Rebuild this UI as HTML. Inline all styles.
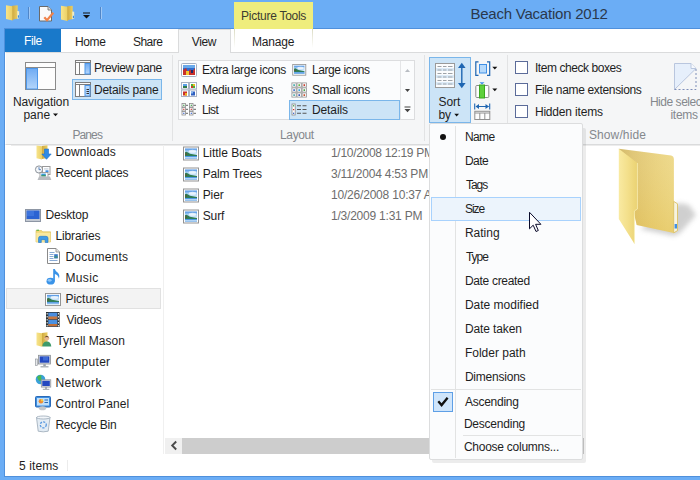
<!DOCTYPE html>
<html><head><meta charset="utf-8">
<style>
*{box-sizing:border-box;margin:0;padding:0}
html,body{width:700px;height:480px;overflow:hidden;background:#6badf5}
body{position:relative;font-family:"Liberation Sans",sans-serif;font-size:12px;color:#1e1e1e}
.a{position:absolute}
.t{position:absolute;white-space:nowrap}
svg{position:absolute;overflow:visible}
</style></head><body>
<!-- window frame / title bar -->
<div class="a" style="left:0;top:0;width:700px;height:480px;background:#6badf5"></div>
<div class="a" style="left:4px;top:28px;width:696px;height:449px;background:#4f90dc"></div>
<!-- picture tools -->
<div class="a" style="left:234px;top:2px;width:79px;height:27px;background:#efed7d"></div>
<!-- tab row -->
<div class="a" style="left:5px;top:29px;width:695px;height:23px;background:#fff"></div>
<div class="a" style="left:5px;top:29px;width:56px;height:23px;background:#1979ca"></div>
<div class="a" style="left:178px;top:29px;width:53px;height:24px;background:#f5f6f7;border:1px solid #dadbdc;border-bottom:none"></div>
<div class="a" style="left:234px;top:29px;width:1px;height:19px;background:linear-gradient(#dcdcc4,#fff)"></div><div class="a" style="left:312px;top:29px;width:1px;height:19px;background:linear-gradient(#dcdcc4,#fff)"></div>
<!-- ribbon body -->
<div class="a" style="left:5px;top:52px;width:695px;height:93px;background:#f5f6f7;border-top:1px solid #dadbdc;border-bottom:1px solid #dadbdc;border-left:1px solid #fff"></div>
<div class="a" style="left:179px;top:52px;width:51px;height:1px;background:#f5f6f7"></div>

<!-- Panes group -->
<div class="a" style="left:72px;top:79px;width:90px;height:21px;background:#cce4f7;border:1px solid #7ab6ea"></div>
<div class="a" style="left:172px;top:55px;width:1px;height:86px;background:#e2e3e4"></div>

<!-- Layout group -->
<div class="a" style="left:178px;top:60px;width:237px;height:60px;background:#fbfcfd;border:1px solid #dcdddf"></div>
<div class="a" style="left:289px;top:100px;width:111px;height:20px;background:#cce4f7;border:1px solid #7ab6ea"></div>
<div class="a" style="left:424px;top:55px;width:1px;height:86px;background:#e2e3e4"></div>

<!-- Current view -->
<div class="a" style="left:429px;top:57px;width:42px;height:66px;background:#cce4f7;border:1px solid #7ab6ea"></div>
<div class="a" style="left:507px;top:55px;width:1px;height:68px;background:#e2e3e4"></div>

<!-- Show/hide -->
<div class="a" style="left:515px;top:61px;width:13px;height:13px;background:#fff;border:1px solid #5b6b99"></div>
<div class="a" style="left:515px;top:83px;width:13px;height:13px;background:#fff;border:1px solid #5b6b99"></div>
<div class="a" style="left:515px;top:105px;width:13px;height:13px;background:#fff;border:1px solid #5b6b99"></div>

<!-- content -->
<div class="a" style="left:5px;top:145px;width:695px;height:331px;background:#fff"></div>

<div class="a" style="left:11px;top:145px;width:689px;height:1px;background:#ececec"></div>
<div class="a" style="left:163px;top:145px;width:1px;height:309px;background:#f0f0f0"></div>
<!-- nav selection -->
<div class="a" style="left:6px;top:288px;width:155px;height:21px;background:#f3f3f3;border:1px solid #e1e1e1"></div>
<!-- scrollbar -->
<div class="a" style="left:165px;top:438px;width:419px;height:16px;background:#f0f0f0"></div>
<div class="a" style="left:182px;top:438px;width:402px;height:16px;background:#cdcdcd"></div>
<!-- status -->
<div class="a" style="left:67px;top:460px;width:1px;height:11px;background:#ececec"></div>

<svg width="700" height="480" viewBox="0 0 700 480" style="left:0;top:0">
<defs>
<linearGradient id="fy" x1="0" y1="0" x2="1" y2="0"><stop offset="0" stop-color="#f7e596"/><stop offset="1" stop-color="#e6cb69"/></linearGradient>
<linearGradient id="fb" x1="0" y1="0" x2="1" y2="0"><stop offset="0" stop-color="#cfb155"/><stop offset=".45" stop-color="#e2c666"/><stop offset="1" stop-color="#ecd47d"/></linearGradient>
<linearGradient id="bl" x1="0" y1="0" x2="0" y2="1"><stop offset="0" stop-color="#6fabf3"/><stop offset="1" stop-color="#b4d6fb"/></linearGradient>
<linearGradient id="sky" x1="0" y1="0" x2="0" y2="1"><stop offset="0" stop-color="#8ec5f2"/><stop offset=".45" stop-color="#d6ecf7"/><stop offset=".5" stop-color="#2f6b5a"/><stop offset=".7" stop-color="#3d8a78"/><stop offset=".75" stop-color="#2d7fc8"/><stop offset="1" stop-color="#2a6fc0"/></linearGradient>
<linearGradient id="shd" x1="0" y1="0" x2="1" y2="0"><stop offset="0" stop-color="#000" stop-opacity=".28"/><stop offset="1" stop-color="#000" stop-opacity="0"/></linearGradient>
<g id="sfold">
 <polygon points="6.3,0.800 11.700,0.200 11.700,13.600 6.300,14.800" fill="url(#fbs)"/>
 <polygon points="11.200,6 13.200,6.300 13.200,13.300 11.200,13.700" fill="#f3ecc0"/>
 <rect x="11.900" y="10.300" width="1.100" height="2.400" fill="#3a8ee0"/>
 <rect x="6" y="1.200" width="1" height="14" fill="#c7a540"/>
 <polygon points="0,0.300 6.400,1.200 6.400,15.600 0,14" fill="url(#fys)"/>
</g>
<g id="pic">
 <rect x="0.500" y="0.500" width="15" height="13" fill="#fff" stroke="#939393"/>
 <rect x="2" y="2" width="12" height="10" fill="url(#sky2)"/>
 <ellipse cx="9.500" cy="4.800" rx="3.800" ry="1.500" fill="#fff" opacity=".75"/>
 <polygon points="2,5.800 3.500,5.200 5,6 7,7.300 14,8.600 14,9.600 2,9.600" fill="#2f7d55"/>
 <rect x="2.600" y="7" width="1.200" height="1.200" fill="#8a3a20"/>
 <rect x="2" y="9.600" width="12" height="2.400" fill="#3f8ee0"/>
 <rect x="2" y="10.500" width="12" height=".8" fill="#cfe6fa"/>
</g>
<linearGradient id="bigsh" x1="0" y1="0" x2="1" y2="0"><stop offset="0" stop-color="#888" stop-opacity=".55"/><stop offset="1" stop-color="#bbb" stop-opacity="0"/></linearGradient>
<linearGradient id="fys" x1="0" y1="0" x2="1" y2="0"><stop offset="0" stop-color="#f7e48c"/><stop offset="1" stop-color="#ebcf64"/></linearGradient><linearGradient id="fbs" x1="0" y1="0" x2="1" y2="0"><stop offset="0" stop-color="#cfa941"/><stop offset="1" stop-color="#ebcf63"/></linearGradient>
<linearGradient id="sky2" x1="0" y1="0" x2="0" y2="1"><stop offset="0" stop-color="#4a90e2"/><stop offset=".3" stop-color="#a9d1f5"/><stop offset=".75" stop-color="#e6f2fb"/><stop offset="1" stop-color="#e6f2fb"/></linearGradient>
</defs>
<!-- titlebar icons -->
<g transform="translate(6,5)">
 <polygon points="6.3,0.800 11.700,0.200 11.700,13.600 6.300,14.800" fill="url(#fbs)"/>
 <polygon points="11.200,6 13.200,6.300 13.200,13.300 11.200,13.700" fill="#f3ecc0"/>
 <rect x="11.900" y="10.300" width="1.100" height="2.400" fill="#3a8ee0"/>
 <rect x="6" y="1.200" width="1" height="14" fill="#c7a540"/>
 <polygon points="0,0.300 6.400,1.200 6.400,15.600 0,14" fill="url(#fys)"/>
</g>
<rect x="28" y="7" width="1" height="12" fill="#4f86c9"/><rect x="29" y="7" width="1" height="12" fill="#9fc8f6"/>
<path d="M39.5,6.5h8.5l3.5,3.5v11h-12z" fill="#fafafa" stroke="#6a6a6a"/>
<path d="M48,6.5v3.5h3.5" fill="#ddd" stroke="#6a6a6a" stroke-width=".8"/>
<path d="M44.3,17.2l2.7,3 6.3,-7.4" fill="none" stroke="#f0824a" stroke-width="2.2"/>
<g transform="translate(61,5.5)">
 <polygon points="6.3,0.800 11.700,0.200 11.700,13.600 6.300,14.800" fill="url(#fbs)"/>
 <polygon points="11.200,6 13.200,6.300 13.200,13.300 11.200,13.700" fill="#f3ecc0"/>
 <rect x="11.900" y="10.300" width="1.100" height="2.400" fill="#3a8ee0"/>
 <rect x="6" y="1.200" width="1" height="14" fill="#c7a540"/>
 <polygon points="0,0.300 6.400,1.200 6.400,15.600 0,14" fill="url(#fys)"/>
</g>
<rect x="83" y="12.500" width="7" height="1" fill="#111"/><polygon points="83,15 90,15 86.500,18.500" fill="#111"/>
<rect x="100" y="7" width="1" height="12" fill="#4f86c9"/><rect x="101" y="7" width="1" height="12" fill="#9fc8f6"/>

<!-- Navigation pane icon -->
<rect x="25.5" y="62.5" width="30" height="27" fill="#fdfdfd" stroke="#8b8b8b"/>
<rect x="26" y="67" width="29" height="1" fill="#8b8b8b"/>
<rect x="26.5" y="68.5" width="11" height="20.5" fill="url(#bl)" stroke="#4d97ea"/>
<polygon points="53,113.5 58,113.5 55.5,116.3" fill="#111"/>
<!-- Preview pane icon -->
<rect x="75.5" y="60.5" width="15" height="14" fill="#fdfdfd" stroke="#7d7d7d"/>
<rect x="76" y="62" width="14" height="1" fill="#7d7d7d"/>
<rect x="79" y="63" width="1" height="11" fill="#7d7d7d"/>
<rect x="85" y="63.5" width="5" height="10.5" fill="url(#bl)" stroke="#4d97ea"/>
<!-- Details pane icon -->
<rect x="75.5" y="82.5" width="15" height="14" fill="#fdfdfd" stroke="#7d7d7d"/>
<rect x="76" y="84" width="14" height="1" fill="#7d7d7d"/>
<rect x="79" y="85" width="1" height="11" fill="#7d7d7d"/>
<rect x="85" y="85.5" width="5" height="10.5" fill="#b9d9fb" stroke="#4d97ea"/>
<path d="M86.5,89.5h2.5M86.5,91.5h2.5M86.5,93.5h2.5" stroke="#333" stroke-width="1"/>

<!-- Layout icons -->
<rect x="181.500" y="63.500" width="15" height="13" rx="1" fill="#fff" stroke="#a6b0c2"/>
<rect x="183" y="65" width="12" height="10" fill="#2e6fd0"/>
<rect x="183" y="65" width="12" height="3" fill="#6aa9ea"/>
<polygon points="183,75 183,70 186,68 188,72 190,69 192,72 195,68 195,75" fill="#c8302a"/>
<rect x="186" y="71" width="3" height="4" fill="#f2c530"/><rect x="191" y="70" width="2" height="3" fill="#1a2a6a"/>
<!-- medium icons -->
<g fill="#fff" stroke="#aab3c4"><rect x="181.500" y="82.500" width="7" height="6.500"/><rect x="189.500" y="82.500" width="7" height="6.500"/><rect x="181.500" y="90" width="7" height="6.500"/><rect x="189.500" y="90" width="7" height="6.500"/></g>
<rect x="183" y="84" width="4" height="2" fill="#5aa0e8"/><rect x="183" y="86" width="4" height="2" fill="#2f7a4a"/>
<rect x="191" y="84" width="4" height="4" fill="#4ab03a"/><rect x="193" y="84" width="2" height="2" fill="#e8c020"/><rect x="191" y="86" width="2" height="2" fill="#d03a2a"/>
<rect x="183" y="91.500" width="4" height="4" fill="#c8302a"/><rect x="185" y="93" width="2" height="2.500" fill="#f0b020"/>
<rect x="191" y="91.500" width="4" height="4" fill="#2e5fc0"/><rect x="191" y="91.500" width="2" height="2" fill="#88b8ee"/>
<!-- list icon -->
<g fill="#fff" stroke="#8c8c8c" stroke-width=".8">
<rect x="182" y="103.500" width="3.500" height="3.500"/><rect x="182" y="107.500" width="3.500" height="3.500"/><rect x="182" y="111.500" width="3.500" height="3.500"/>
<rect x="189.500" y="103.500" width="3.500" height="3.500"/><rect x="189.500" y="107.500" width="3.500" height="3.500"/><rect x="189.500" y="111.500" width="3.500" height="3.500"/></g>
<g><rect x="183.200" y="104.700" width="1.200" height="1.200" fill="#2a9a3a"/><rect x="183.200" y="108.700" width="1.200" height="1.200" fill="#d02a2a"/><rect x="183.200" y="112.700" width="1.200" height="1.200" fill="#2a5ad0"/>
<rect x="190.700" y="104.700" width="1.200" height="1.200" fill="#2a9a3a"/><rect x="190.700" y="108.700" width="1.200" height="1.200" fill="#d02a2a"/><rect x="190.700" y="112.700" width="1.200" height="1.200" fill="#2a5ad0"/></g>
<path d="M186,105.300h2M186,109.300h2M186,113.300h2M193.500,105.300h2.500M193.500,109.300h2.500M193.500,113.300h2.500" stroke="#666" stroke-width="1"/>
<!-- large icons icon -->
<g transform="translate(292.300,64) scale(.87,.83)">
 <rect x="0.500" y="0.500" width="15" height="13" fill="#fff" stroke="#939393"/>
 <rect x="2" y="2" width="12" height="10" fill="url(#sky2)"/>
 <ellipse cx="9.500" cy="4.800" rx="3.800" ry="1.500" fill="#fff" opacity=".75"/>
 <polygon points="2,5.800 3.500,5.200 5,6 7,7.300 14,8.600 14,9.600 2,9.600" fill="#2f7d55"/>
 <rect x="2.600" y="7" width="1.200" height="1.200" fill="#8a3a20"/>
 <rect x="2" y="9.600" width="12" height="2.400" fill="#3f8ee0"/>
 <rect x="2" y="10.500" width="12" height=".8" fill="#cfe6fa"/>
</g>
<!-- small icons -->
<g fill="#fff" stroke="#939393" stroke-width=".8">
<rect x="291.900" y="82.900" width="4.300" height="4.200"/><rect x="297" y="82.900" width="4.300" height="4.200"/><rect x="302.100" y="82.900" width="4.300" height="4.200"/>
<rect x="291.900" y="87.900" width="4.300" height="4.200"/><rect x="297" y="87.900" width="4.300" height="4.200"/><rect x="302.100" y="87.900" width="4.300" height="4.200"/>
<rect x="291.900" y="92.900" width="4.300" height="4.200"/><rect x="297" y="92.900" width="4.300" height="4.200"/><rect x="302.100" y="92.900" width="4.300" height="4.200"/></g>
<g>
<rect x="293.300" y="84.300" width="1.600" height="1.600" fill="#2aa0a0"/><rect x="298.400" y="84.300" width="1.600" height="1.600" fill="#5ab030"/><rect x="303.500" y="84.300" width="1.600" height="1.600" fill="#c02a1a"/>
<rect x="293.300" y="89.300" width="1.600" height="1.600" fill="#2a5ac0"/><rect x="298.400" y="89.300" width="1.600" height="1.600" fill="#2a9ad0"/><rect x="303.500" y="89.300" width="1.600" height="1.600" fill="#3a9a3a"/>
<rect x="293.300" y="94.300" width="1.600" height="1.600" fill="#3aa0a0"/><rect x="298.400" y="94.300" width="1.600" height="1.600" fill="#2a4ab0"/><rect x="303.500" y="94.300" width="1.600" height="1.600" fill="#c0401a"/></g>
<!-- details icon (in highlighted) placed after highlight -->
</svg>
<svg width="700" height="480" viewBox="0 0 700 480" style="left:0;top:0">
<!-- details icon -->
<rect x="292" y="104" width="3.200" height="11" fill="#fff" stroke="#8c8c8c" stroke-width=".8"/>
<rect x="293" y="105.200" width="1.200" height="1.200" fill="#2a9a3a"/><rect x="293" y="109" width="1.200" height="1.200" fill="#d02a2a"/><rect x="293" y="112.700" width="1.200" height="1.200" fill="#2a5ad0"/>
<path d="M297,105.700h4M302.500,105.700h4M297,109.500h4M302.500,109.500h4M297,113.300h4M302.500,113.300h4" stroke="#555" stroke-width="1.100"/>
<!-- gallery scroll -->
<rect x="400" y="61" width="1" height="58" fill="#e4e5e7"/>
<polygon points="405,72 410,72 407.500,69" fill="#b8bcc2"/>
<polygon points="405,89 410,89 407.500,92" fill="#444"/>
<rect x="404.500" y="106.500" width="6" height="1" fill="#444"/><polygon points="404.500,109 410.500,109 407.500,112.300" fill="#444"/>
<!-- sort icon -->
<rect x="435.500" y="63.500" width="19" height="24" fill="#fbfcfd" stroke="#9a9a9a"/>
<g fill="#dcebf8"><rect x="436" y="68" width="18" height="3"/><rect x="436" y="75" width="18" height="3"/><rect x="436" y="82" width="18" height="3"/></g>
<path d="M437.500,66.500h4M443,66.500h3.500M448,66.500h4.500 M437.500,70h4M443,70h3.500M448,70h4.500 M437.500,73.500h4M443,73.500h3.500M448,73.500h4.500 M437.500,77h4M443,77h3.500M448,77h4.500 M437.500,80.500h4M443,80.500h3.500M448,80.500h4.500 M437.500,84h4M443,84h3.500M448,84h4.500" stroke="#9ea3a8" stroke-width="1"/>
<path d="M461.800,65v21" stroke="#1f66b2" stroke-width="1.400"/>
<polygon points="461.800,62.800 458,68 465.600,68" fill="#1f66b2"/><polygon points="461.800,88.300 458,83 465.600,83" fill="#1f66b2"/>
<polygon points="454.300,113.800 459,113.800 456.650,116.500" fill="#111"/>
<!-- group by -->
<path d="M478.500,61.800h-2.700v13.600h2.700M487,61.800h2.700v13.600h-2.700" fill="none" stroke="#1f66b2" stroke-width="1.200"/>
<rect x="479.500" y="64.500" width="7" height="8.500" fill="#b5d9fb" stroke="#3f8fe6"/>
<polygon points="492.300,66.800 497.300,66.800 494.800,69.600" fill="#111"/>
<!-- add columns -->
<rect x="475.800" y="85.500" width="13" height="12" rx="1" fill="#fdfdfd" stroke="#8b8b8b"/>
<rect x="479.500" y="85" width="5" height="13" fill="#5fd03c" stroke="#3aa81e"/>
<polygon points="479.500,82.200 484.500,82.200 482,84.600" fill="#3f8fe6"/>
<polygon points="492.300,88.500 497.300,88.500 494.800,91.300" fill="#111"/>
<!-- size columns -->
<path d="M474.700,103.500v6M489.700,103.500v6M476,106.500h12.500" stroke="#1f66b2" stroke-width="1.100" fill="none"/>
<polygon points="475.500,106.500 479,104 479,109" fill="#1f66b2"/><polygon points="489,106.500 485.500,104 485.500,109" fill="#1f66b2"/>
<rect x="474.800" y="111.300" width="15" height="8.200" fill="#fdfdfd" stroke="#909090"/>
<path d="M475,113h15M479.800,113v6.500M484.800,113v6.500" stroke="#909090" stroke-width="1" fill="none"/>
<!-- hide selected -->
<polygon points="674.500,63.500 691,63.500 696,68.500 674.500,89.500" fill="#e6effb" stroke="#b9c6de" stroke-width="1"/>
<path d="M691,63.500v5h5" fill="#f6f9fd" stroke="#b9c6de"/>
<path d="M696,69v20.500h-21.500" fill="none" stroke="#7f8fb8" stroke-width="1" stroke-dasharray="2,2"/>
</svg>
<svg width="700" height="480" viewBox="0 0 700 480" style="left:0;top:0">
<!-- Downloads -->
<polygon points="36.500,145.500 42,146.200 42,159.600 36.500,158.200" fill="url(#fys)"/>
<polygon points="42,146 47.500,145.300 47.500,158 42,159" fill="url(#fbs)"/>
<path d="M44.500,149h4v5h2.700l-4.700,5.300l-4.700,-5.300h2.700z" fill="#2f8be6" stroke="#1d6fc8" stroke-width=".6"/>
<!-- Recent places -->
<circle cx="39" cy="169.500" r="3.600" fill="#f4f6f8" stroke="#8d949c" stroke-width="1"/>
<path d="M39,167.200v2.500h2" stroke="#4a78b8" stroke-width=".9" fill="none"/>
<rect x="42.500" y="166.500" width="7.500" height="8" fill="#fff" stroke="#9a9a9a"/>
<rect x="44" y="168.300" width="4.500" height="1.200" fill="#c9d3de"/><rect x="45.500" y="170.300" width="3" height="2" fill="#3c8ee4"/>
<rect x="40" y="172.500" width="8" height="5" fill="#fff" stroke="#8d8d8d" stroke-width=".8"/>
<rect x="41.300" y="173.600" width="4.500" height="2.800" fill="#3f9ad8"/><rect x="41.300" y="175.300" width="4.500" height="1.100" fill="#3a9a4a"/>
<polygon points="37.500,180 39,176.500 50,176.500 51.300,180" fill="#b9bcc0"/>
<!-- Desktop -->
<rect x="25.500" y="209.500" width="15" height="12" fill="#c3c9d2" stroke="#8d96a4"/>
<rect x="26.500" y="210.500" width="13" height="8.500" fill="#2c63d2"/>
<rect x="27" y="211" width="7" height="5" fill="#4a80e4" opacity=".6"/>
<!-- Libraries -->
<path d="M36,230.500h5.500l1.200,1.300h7.800v10.200h-14.500z" fill="#f2d978" stroke="#d8b850" stroke-width=".6"/>
<rect x="36.500" y="229.700" width="2.500" height="1" fill="#4ab03a"/>
<rect x="36.300" y="232.800" width="14" height="9" fill="#f9e9a0"/>
<path d="M38.500,242.500v-4.200q0,-2 2,-2h5.500q2,0 2,2v4.200h-2.800v-2.800h-3.900v2.800z" fill="#3f9be8" stroke="#1f76c8" stroke-width=".6"/>
<!-- Documents -->
<path d="M47.500,248.500h8.500l3.500,3.500v11.500h-12z" fill="#fff" stroke="#8a8a8a"/>
<path d="M56,248.500v3.500h3.500" fill="#e8e8e8" stroke="#8a8a8a" stroke-width=".8"/>
<path d="M49.500,252.500h5M49.500,254.500h4M49.500,256.500h4M49.500,258.500h4M49.500,260.500h8" stroke="#7aa0d0" stroke-width=".9"/>
<rect x="54.200" y="254.200" width="3.600" height="4.300" fill="#3a78c8"/><rect x="54.200" y="256.500" width="3.600" height="1" fill="#3f9a5a"/>
<!-- Music -->
<ellipse cx="50.600" cy="281.200" rx="4.100" ry="3.400" fill="#3a93e8"/>
<ellipse cx="49.600" cy="280.300" rx="2" ry="1.400" fill="#8cc4f6"/>
<path d="M53.200,281.500v-12.500h1.600q0.600,2 2.800,3.600q2.600,2.200 1.300,6.200q-0.400,-3.600 -4,-4.800v7.500z" fill="#3a93e8"/>
<!-- Pictures -->
<g transform="translate(45,293) scale(1,.93)">
 <rect x="0.500" y="0.500" width="15" height="13" fill="#fff" stroke="#939393"/>
 <rect x="2" y="2" width="12" height="10" fill="url(#sky2)"/>
 <ellipse cx="9.500" cy="4.800" rx="3.800" ry="1.500" fill="#fff" opacity=".75"/>
 <polygon points="2,5.800 3.500,5.200 5,6 7,7.300 14,8.600 14,9.600 2,9.600" fill="#2f7d55"/>
 <rect x="2.600" y="7" width="1.200" height="1.200" fill="#8a3a20"/>
 <rect x="2" y="9.600" width="12" height="2.400" fill="#3f8ee0"/>
 <rect x="2" y="10.500" width="12" height=".8" fill="#cfe6fa"/>
</g>
<!-- Videos -->
<rect x="46" y="312" width="13.600" height="15" fill="#2a2f33"/>
<rect x="48.300" y="312.700" width="9" height="6.600" fill="#4a8ee0"/><rect x="48.300" y="316.500" width="9" height="2.800" fill="#c87840"/>
<rect x="48.300" y="320" width="9" height="6.300" fill="#4a90e0"/><rect x="48.300" y="324" width="9" height="2.300" fill="#c07038"/>
<g fill="#dfe6e3"><rect x="46.600" y="313" width="1.100" height="1.500"/><rect x="46.600" y="316" width="1.100" height="1.500"/><rect x="46.600" y="319" width="1.100" height="1.500"/><rect x="46.600" y="322" width="1.100" height="1.500"/><rect x="46.600" y="325" width="1.100" height="1.500"/>
<rect x="57.900" y="313" width="1.100" height="1.500"/><rect x="57.900" y="316" width="1.100" height="1.500"/><rect x="57.900" y="319" width="1.100" height="1.500"/><rect x="57.900" y="322" width="1.100" height="1.500"/><rect x="57.900" y="325" width="1.100" height="1.500"/></g>
<!-- Tyrell Mason -->
<polygon points="36.500,332.500 42,333.200 42,346.800 36.500,345.300" fill="url(#fys)"/>
<polygon points="42,333 47.500,332.300 47.500,345.200 42,346.200" fill="url(#fbs)"/>
<circle cx="46.800" cy="338.300" r="2.400" fill="#e8b890"/><path d="M44.500,337.500q2.300,-3.500 4.600,0q-2.300,-1 -4.600,0z" fill="#6a4a2a"/>
<path d="M42.300,346.500q0.500,-5 4.500,-5t4.500,5z" fill="#3f9a6a"/>
<!-- Computer -->
<rect x="35.300" y="359" width="2.200" height="6.500" fill="#e6e8ea" stroke="#8a8f96" stroke-width=".6"/>
<rect x="38.500" y="355.300" width="12" height="8.700" fill="#d5d9de" stroke="#8a8f96" stroke-width=".8"/>
<rect x="39.700" y="356.400" width="9.600" height="6.300" fill="#2448c0"/><rect x="43" y="357" width="5" height="3.500" fill="#4a7ae0" opacity=".7"/>
<rect x="43.300" y="364.200" width="2.500" height="1.800" fill="#9aa0a8"/><rect x="40.500" y="366" width="8" height="1.500" fill="#b0b5bb"/>
<!-- Network -->
<circle cx="40.500" cy="379.500" r="4.800" fill="#3aa0d8"/><path d="M37,377q2,-2.500 4.500,-1.500q-1,2.500 0.500,4q-2,2.500 -3.500,0.500z" fill="#4ab850"/>
<rect x="41.300" y="379.800" width="9.500" height="7.300" fill="#d5d9de" stroke="#8a8f96" stroke-width=".7"/>
<rect x="42.300" y="380.800" width="7.500" height="5.200" fill="#2448c0"/>
<rect x="45" y="387.200" width="2" height="1.600" fill="#9aa0a8"/><rect x="42.800" y="388.800" width="6.500" height="1.200" fill="#b0b5bb"/>
<!-- Control Panel -->
<rect x="35.500" y="396.500" width="15" height="10.500" rx="1" fill="#3f8fe0" stroke="#2a6ab8"/>
<rect x="37" y="398" width="12" height="7.500" fill="#bfe0fb"/>
<circle cx="41" cy="401.300" r="2.300" fill="#f08a30"/><path d="M41,401.300v-2.300a2.300,2.300 0 0 1 2.300,2.300z" fill="#f6d040"/>
<path d="M44.500,400h3.500M44.500,402.500h3.500" stroke="#2a6ab8" stroke-width="1"/>
<ellipse cx="42.500" cy="408.300" rx="3.600" ry="2" fill="#c3c7cc"/>
<!-- Recycle bin -->
<path d="M36.500,417.500h13.500l-1.800,13.700q-5,1.300 -10,0z" fill="#e3ecf4" stroke="#9aa8b6" stroke-width=".8"/>
<ellipse cx="43.300" cy="417.500" rx="6.800" ry="1.500" fill="#f2f6fa" stroke="#9aa8b6" stroke-width=".8"/>
<circle cx="43.300" cy="424.800" r="3" fill="none" stroke="#5a9ae0" stroke-width="1.300" stroke-dasharray="2.200,1.200"/>
<!-- file icons -->
<g transform="translate(183,146.500)">
 <rect x="0.500" y="0.500" width="15" height="13" fill="#fff" stroke="#939393"/>
 <rect x="2" y="2" width="12" height="10" fill="url(#sky2)"/>
 <ellipse cx="9.500" cy="4.800" rx="3.800" ry="1.500" fill="#fff" opacity=".75"/>
 <polygon points="2,5.800 3.500,5.200 5,6 7,7.300 14,8.600 14,9.600 2,9.600" fill="#2f7d55"/>
 <rect x="2.600" y="7" width="1.200" height="1.200" fill="#8a3a20"/>
 <rect x="2" y="9.600" width="12" height="2.400" fill="#3f8ee0"/>
 <rect x="2" y="10.500" width="12" height=".8" fill="#cfe6fa"/>
</g><g transform="translate(183,167.500)">
 <rect x="0.500" y="0.500" width="15" height="13" fill="#fff" stroke="#939393"/>
 <rect x="2" y="2" width="12" height="10" fill="url(#sky2)"/>
 <ellipse cx="9.500" cy="4.800" rx="3.800" ry="1.500" fill="#fff" opacity=".75"/>
 <polygon points="2,5.800 3.500,5.200 5,6 7,7.300 14,8.600 14,9.600 2,9.600" fill="#2f7d55"/>
 <rect x="2.600" y="7" width="1.200" height="1.200" fill="#8a3a20"/>
 <rect x="2" y="9.600" width="12" height="2.400" fill="#3f8ee0"/>
 <rect x="2" y="10.500" width="12" height=".8" fill="#cfe6fa"/>
</g><g transform="translate(183,188.500)">
 <rect x="0.500" y="0.500" width="15" height="13" fill="#fff" stroke="#939393"/>
 <rect x="2" y="2" width="12" height="10" fill="url(#sky2)"/>
 <ellipse cx="9.500" cy="4.800" rx="3.800" ry="1.500" fill="#fff" opacity=".75"/>
 <polygon points="2,5.800 3.500,5.200 5,6 7,7.300 14,8.600 14,9.600 2,9.600" fill="#2f7d55"/>
 <rect x="2.600" y="7" width="1.200" height="1.200" fill="#8a3a20"/>
 <rect x="2" y="9.600" width="12" height="2.400" fill="#3f8ee0"/>
 <rect x="2" y="10.500" width="12" height=".8" fill="#cfe6fa"/>
</g><g transform="translate(183,209.500)">
 <rect x="0.500" y="0.500" width="15" height="13" fill="#fff" stroke="#939393"/>
 <rect x="2" y="2" width="12" height="10" fill="url(#sky2)"/>
 <ellipse cx="9.500" cy="4.800" rx="3.800" ry="1.500" fill="#fff" opacity=".75"/>
 <polygon points="2,5.800 3.500,5.200 5,6 7,7.300 14,8.600 14,9.600 2,9.600" fill="#2f7d55"/>
 <rect x="2.600" y="7" width="1.200" height="1.200" fill="#8a3a20"/>
 <rect x="2" y="9.600" width="12" height="2.400" fill="#3f8ee0"/>
 <rect x="2" y="10.500" width="12" height=".8" fill="#cfe6fa"/>
</g>
<!-- scrollbar arrow -->
<path d="M176.200,441.500l-4,4l4,4" fill="none" stroke="#4a4a4a" stroke-width="1.900"/>
<!-- big folder -->
<defs><filter id="blur" x="-30%" y="-30%" width="160%" height="160%"><feGaussianBlur stdDeviation="2.6"/></filter>
<linearGradient id="bfb" x1="0" y1="0" x2="1" y2="0.15"><stop offset="0" stop-color="#cdb057"/><stop offset=".25" stop-color="#dcc067"/><stop offset=".7" stop-color="#e8cf76"/><stop offset="1" stop-color="#ecd680"/></linearGradient>
<linearGradient id="bff" x1="0" y1="0" x2="1" y2="0"><stop offset="0" stop-color="#f9eaa2"/><stop offset=".5" stop-color="#f3df8a"/><stop offset="1" stop-color="#ead272"/></linearGradient>
<linearGradient id="bfv" x1="0" y1="0" x2="0" y2="1"><stop offset="0" stop-color="#fff" stop-opacity=".12"/><stop offset="1" stop-color="#d9a520" stop-opacity=".18"/></linearGradient>
</defs>
<polygon points="640,229 674,236 680,233 696,215 689,205 679,203 660,215" fill="#8a8a8a" opacity=".4" filter="url(#blur)"/>
<path d="M618.800,148.700L671,155.600q2.900,0.600 2.900,3.900v73.400l-37.200,-8z" fill="url(#bfb)"/>
<path d="M618.800,148.700L671,155.600q2.900,0.600 2.900,3.900v73.400l-37.200,-8z" fill="url(#bfv)"/>
<path d="M673.700,201.400l3.800,2.400v26.800l-3.800,2.300z" fill="#f6f3e2" stroke="#dcc163" stroke-width=".9"/>
<rect x="674.600" y="224" width="2.400" height="4.500" fill="#3f8fe6"/>
<polygon points="618.800,148.700 637.400,163 637.400,209 634.400,211 634.400,243.700 618.800,219" fill="url(#bff)"/>
<path d="M637.400,163V209L634.400,211V243.700" fill="none" stroke="#f8edb5" stroke-width=".8"/>
</svg>

<div class="t" style="left:470.4px;top:5.0px;font-size:15px;line-height:17px;height:17px;letter-spacing:-0.22px;color:#2a384c;">Beach Vacation 2012</div>
<div class="t" style="left:241.1px;top:8.8px;font-size:12px;line-height:14px;height:14px;letter-spacing:-0.27px;color:#3c3c30;">Picture Tools</div>
<div class="t" style="left:23.9px;top:33.8px;font-size:12px;line-height:14px;height:14px;letter-spacing:-0.33px;color:#ffffff;">File</div>
<div class="t" style="left:74.9px;top:34.8px;font-size:12px;line-height:14px;height:14px;letter-spacing:-0.33px;color:#1e1e1e;">Home</div>
<div class="t" style="left:132.9px;top:34.8px;font-size:12px;line-height:14px;height:14px;letter-spacing:-0.50px;color:#1e1e1e;">Share</div>
<div class="t" style="left:191.7px;top:34.8px;font-size:12px;line-height:14px;height:14px;letter-spacing:-0.33px;color:#1e1e1e;">View</div>
<div class="t" style="left:251.9px;top:34.8px;font-size:12px;line-height:14px;height:14px;letter-spacing:-0.15px;color:#1e1e1e;">Manage</div>
<div class="t" style="left:12.9px;top:94.8px;font-size:12px;line-height:14px;height:14px;letter-spacing:-0.06px;color:#1e1e1e;">Navigation</div>
<div class="t" style="left:23.4px;top:107.6px;font-size:12px;line-height:14px;height:14px;letter-spacing:0.00px;color:#1e1e1e;">pane</div>
<div class="t" style="left:93.9px;top:60.8px;font-size:12px;line-height:14px;height:14px;letter-spacing:-0.41px;color:#1e1e1e;">Preview pane</div>
<div class="t" style="left:93.9px;top:82.8px;font-size:12px;line-height:14px;height:14px;letter-spacing:-0.18px;color:#1e1e1e;">Details pane</div>
<div class="t" style="left:72.4px;top:127.6px;font-size:12px;line-height:14px;height:14px;letter-spacing:-0.88px;color:#84888d;">Panes</div>
<div class="t" style="left:201.9px;top:62.8px;font-size:12px;line-height:14px;height:14px;letter-spacing:-0.31px;color:#1e1e1e;">Extra large icons</div>
<div class="t" style="left:201.9px;top:82.8px;font-size:12px;line-height:14px;height:14px;letter-spacing:-0.23px;color:#1e1e1e;">Medium icons</div>
<div class="t" style="left:201.9px;top:102.8px;font-size:12px;line-height:14px;height:14px;letter-spacing:-0.58px;color:#1e1e1e;">List</div>
<div class="t" style="left:311.9px;top:62.8px;font-size:12px;line-height:14px;height:14px;letter-spacing:-0.40px;color:#1e1e1e;">Large icons</div>
<div class="t" style="left:311.9px;top:82.8px;font-size:12px;line-height:14px;height:14px;letter-spacing:-0.30px;color:#1e1e1e;">Small icons</div>
<div class="t" style="left:311.9px;top:102.8px;font-size:12px;line-height:14px;height:14px;letter-spacing:-0.08px;color:#1e1e1e;">Details</div>
<div class="t" style="left:280.1px;top:127.6px;font-size:12px;line-height:14px;height:14px;letter-spacing:-0.40px;color:#84888d;">Layout</div>
<div class="t" style="left:438.4px;top:94.8px;font-size:12px;line-height:14px;height:14px;letter-spacing:0.00px;color:#1e1e1e;">Sort</div>
<div class="t" style="left:438.4px;top:107.6px;font-size:12px;line-height:14px;height:14px;letter-spacing:0.00px;color:#1e1e1e;">by</div>
<div class="t" style="left:534.9px;top:60.8px;font-size:12px;line-height:14px;height:14px;letter-spacing:-0.43px;color:#1e1e1e;">Item check boxes</div>
<div class="t" style="left:534.9px;top:82.8px;font-size:12px;line-height:14px;height:14px;letter-spacing:-0.34px;color:#1e1e1e;">File name extensions</div>
<div class="t" style="left:534.9px;top:104.6px;font-size:12px;line-height:14px;height:14px;letter-spacing:-0.18px;color:#1e1e1e;">Hidden items</div>
<div class="t" style="left:649.9px;top:94.8px;font-size:12px;line-height:14px;height:14px;letter-spacing:-0.46px;color:#84888d;">Hide selected</div>
<div class="t" style="left:670.4px;top:107.6px;font-size:12px;line-height:14px;height:14px;letter-spacing:-0.25px;color:#84888d;">items</div>
<div class="t" style="left:588.9px;top:127.6px;font-size:12px;line-height:14px;height:14px;letter-spacing:0.12px;color:#84888d;">Show/hide</div>
<div class="t" style="left:55.4px;top:144.8px;font-size:12px;line-height:14px;height:14px;letter-spacing:0.12px;color:#1e1e1e;">Downloads</div>
<div class="t" style="left:55.4px;top:165.8px;font-size:12px;line-height:14px;height:14px;letter-spacing:-0.25px;color:#1e1e1e;">Recent places</div>
<div class="t" style="left:45.4px;top:207.8px;font-size:12px;line-height:14px;height:14px;letter-spacing:-0.17px;color:#1e1e1e;">Desktop</div>
<div class="t" style="left:55.4px;top:228.8px;font-size:12px;line-height:14px;height:14px;letter-spacing:-0.12px;color:#1e1e1e;">Libraries</div>
<div class="t" style="left:65.4px;top:249.8px;font-size:12px;line-height:14px;height:14px;letter-spacing:0.25px;color:#1e1e1e;">Documents</div>
<div class="t" style="left:65.4px;top:270.8px;font-size:12px;line-height:14px;height:14px;letter-spacing:0.38px;color:#1e1e1e;">Music</div>
<div class="t" style="left:65.4px;top:291.8px;font-size:12px;line-height:14px;height:14px;letter-spacing:0.00px;color:#1e1e1e;">Pictures</div>
<div class="t" style="left:66.4px;top:312.8px;font-size:12px;line-height:14px;height:14px;letter-spacing:-0.20px;color:#1e1e1e;">Videos</div>
<div class="t" style="left:56.4px;top:333.8px;font-size:12px;line-height:14px;height:14px;letter-spacing:0.05px;color:#1e1e1e;">Tyrell Mason</div>
<div class="t" style="left:55.4px;top:354.8px;font-size:12px;line-height:14px;height:14px;letter-spacing:0.29px;color:#1e1e1e;">Computer</div>
<div class="t" style="left:55.4px;top:375.8px;font-size:12px;line-height:14px;height:14px;letter-spacing:0.33px;color:#1e1e1e;">Network</div>
<div class="t" style="left:55.4px;top:396.8px;font-size:12px;line-height:14px;height:14px;letter-spacing:0.08px;color:#1e1e1e;">Control Panel</div>
<div class="t" style="left:55.4px;top:417.8px;font-size:12px;line-height:14px;height:14px;letter-spacing:-0.20px;color:#1e1e1e;">Recycle Bin</div>
<div class="t" style="left:202.7px;top:145.5px;font-size:12px;line-height:14px;height:14px;letter-spacing:-0.03px;color:#1e1e1e;">Little Boats</div>
<div class="t" style="left:202.7px;top:166.5px;font-size:12px;line-height:14px;height:14px;letter-spacing:-0.14px;color:#1e1e1e;">Palm Trees</div>
<div class="t" style="left:202.7px;top:187.5px;font-size:12px;line-height:14px;height:14px;letter-spacing:-0.10px;color:#1e1e1e;">Pier</div>
<div class="t" style="left:202.7px;top:208.5px;font-size:12px;line-height:14px;height:14px;letter-spacing:-0.10px;color:#1e1e1e;">Surf</div>
<div class="t" style="left:331.0px;top:145.5px;font-size:12px;line-height:14px;height:14px;letter-spacing:-0.30px;color:#6d6d6d;">1/10/2008 12:19 PM</div>
<div class="t" style="left:331.0px;top:166.5px;font-size:12px;line-height:14px;height:14px;letter-spacing:-0.21px;color:#6d6d6d;">3/11/2004 4:53 PM</div>
<div class="t" style="left:331.0px;top:187.5px;font-size:12px;line-height:14px;height:14px;letter-spacing:-0.20px;color:#6d6d6d;">10/26/2008 10:37 AM</div>
<div class="t" style="left:331.0px;top:208.5px;font-size:12px;line-height:14px;height:14px;letter-spacing:-0.22px;color:#6d6d6d;">1/3/2009 1:31 PM</div>
<div class="t" style="left:19.1px;top:458.8px;font-size:12px;line-height:14px;height:14px;letter-spacing:0.08px;color:#1e1e1e;">5 items</div>

<!-- menu -->
<div class="a" style="left:432px;top:128px;width:153.500px;height:335px;background:rgba(0,0,0,.075);border-radius:2px"></div>
<div class="a" style="left:429px;top:123px;width:153.500px;height:337px;background:#fbfcfd;border:1px solid #dcddde;border-radius:2px"></div>
<div class="a" style="left:455px;top:126px;width:1px;height:332px;background:#e2e3e3"></div>
<div class="a" style="left:431px;top:197px;width:150px;height:24px;background:#ecf4fc;border:1px solid #a8d2fd"></div>
<div class="a" style="left:431px;top:389px;width:150px;height:1px;background:#e2e3e3"></div>
<div class="a" style="left:433px;top:392px;width:20px;height:20px;background:#cfe5fb;border:1px solid #5e9fe6"></div>
<div class="a" style="left:463px;top:435px;width:118px;height:1px;background:#e2e3e3"></div>
<div class="t" style="left:464.9px;top:129.8px;font-size:12px;line-height:14px;height:14px;letter-spacing:-0.58px;color:#1e1e1e;">Name</div>
<div class="t" style="left:464.9px;top:153.8px;font-size:12px;line-height:14px;height:14px;letter-spacing:-0.50px;color:#1e1e1e;">Date</div>
<div class="t" style="left:465.9px;top:177.8px;font-size:12px;line-height:14px;height:14px;letter-spacing:-1.00px;color:#1e1e1e;">Tags</div>
<div class="t" style="left:464.9px;top:201.8px;font-size:12px;line-height:14px;height:14px;letter-spacing:-1.00px;color:#1e1e1e;">Size</div>
<div class="t" style="left:464.9px;top:225.8px;font-size:12px;line-height:14px;height:14px;letter-spacing:0.00px;color:#1e1e1e;">Rating</div>
<div class="t" style="left:465.9px;top:249.8px;font-size:12px;line-height:14px;height:14px;letter-spacing:-1.00px;color:#1e1e1e;">Type</div>
<div class="t" style="left:464.9px;top:273.8px;font-size:12px;line-height:14px;height:14px;letter-spacing:-0.32px;color:#1e1e1e;">Date created</div>
<div class="t" style="left:464.9px;top:297.8px;font-size:12px;line-height:14px;height:14px;letter-spacing:0.00px;color:#1e1e1e;">Date modified</div>
<div class="t" style="left:464.9px;top:321.8px;font-size:12px;line-height:14px;height:14px;letter-spacing:-0.11px;color:#1e1e1e;">Date taken</div>
<div class="t" style="left:464.9px;top:345.8px;font-size:12px;line-height:14px;height:14px;letter-spacing:0.00px;color:#1e1e1e;">Folder path</div>
<div class="t" style="left:464.9px;top:369.8px;font-size:12px;line-height:14px;height:14px;letter-spacing:-0.22px;color:#1e1e1e;">Dimensions</div>
<div class="t" style="left:464.9px;top:394.8px;font-size:12px;line-height:14px;height:14px;letter-spacing:-0.25px;color:#1e1e1e;">Ascending</div>
<div class="t" style="left:463.9px;top:416.8px;font-size:12px;line-height:14px;height:14px;letter-spacing:-0.22px;color:#1e1e1e;">Descending</div>
<div class="t" style="left:463.9px;top:440.3px;font-size:12px;line-height:14px;height:14px;letter-spacing:-0.25px;color:#1e1e1e;">Choose columns...</div>
<svg width="700" height="480" viewBox="0 0 700 480" style="left:0;top:0">
<circle cx="443" cy="137" r="3" fill="#111"/>
<path d="M438.300,401.300l3.300,3.800l6,-7.300" fill="none" stroke="#111" stroke-width="2.300"/>
<path d="M529.500,212.300v16.500l3.700,-3.600l2.800,6.300l2.300,-1l-2.700,-6.200h5.300z" fill="#fff" stroke="#0a0a2a" stroke-width="1"/>
</svg>
</body></html>
